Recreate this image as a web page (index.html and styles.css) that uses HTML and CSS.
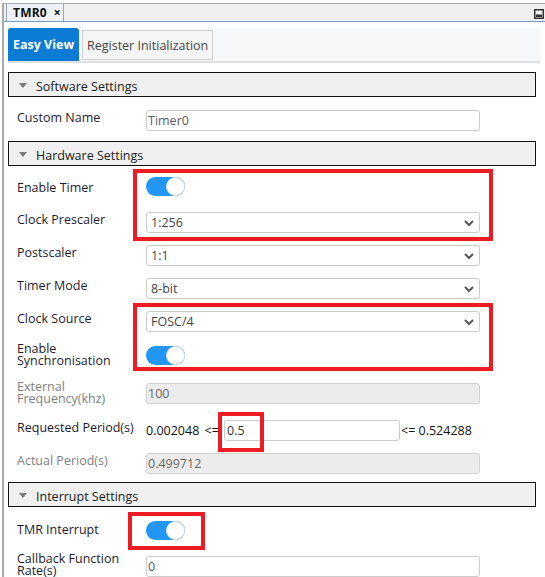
FILE: index.html
```html
<!DOCTYPE html>
<html lang="en">
<head>
<meta charset="utf-8">
<title>TMR0</title>
<link rel="stylesheet" href="styles.css">
</head>
<body>
<div class="frame">
  <div class="topbar">
    <div class="doc-tab"><span class="doc-title">TMR0</span><span class="doc-close">×</span></div>
    <svg class="minimize" width="10" height="10" viewBox="0 0 10 10">
      <rect x="0.75" y="0.75" width="8.5" height="8.5" fill="#f4f4f4" stroke="#333" stroke-width="1.5"/>
      <rect x="2" y="5.5" width="6" height="2.5" fill="#333"/>
    </svg>
  </div>
  <div class="content">
    <div class="view-tabs">
      <div class="view-tab active">Easy View</div>
      <div class="view-tab">Register Initialization</div>
    </div>

    <section class="section">
      <div class="section-header"><span class="caret"></span>Software Settings</div>
      <div class="section-body body-sw">
        <div class="row"><div class="lbl">Custom Name</div><div class="field input">Timer0</div></div>
      </div>
    </section>

    <section class="section">
      <div class="section-header"><span class="caret"></span>Hardware Settings</div>
      <div class="section-body body-hw">
        <div class="row row-toggle"><div class="lbl">Enable Timer</div><div class="toggle"><span class="knob"></span></div></div>
        <div class="row"><div class="lbl">Clock Prescaler</div><div class="field select"><span>1:256</span><svg class="chev" width="10" height="6" viewBox="0 0 10 6"><path d="M1 1 L5 5 L9 1" fill="none" stroke="#555" stroke-width="2"/></svg></div></div>
        <div class="row"><div class="lbl">Postscaler</div><div class="field select"><span>1:1</span><svg class="chev" width="10" height="6" viewBox="0 0 10 6"><path d="M1 1 L5 5 L9 1" fill="none" stroke="#555" stroke-width="2"/></svg></div></div>
        <div class="row"><div class="lbl">Timer Mode</div><div class="field select"><span>8-bit</span><svg class="chev" width="10" height="6" viewBox="0 0 10 6"><path d="M1 1 L5 5 L9 1" fill="none" stroke="#555" stroke-width="2"/></svg></div></div>
        <div class="row"><div class="lbl">Clock Source</div><div class="field select"><span>FOSC/4</span><svg class="chev" width="10" height="6" viewBox="0 0 10 6"><path d="M1 1 L5 5 L9 1" fill="none" stroke="#555" stroke-width="2"/></svg></div></div>
        <div class="row row-sync"><div class="lbl lbl-two">Enable<br>Synchronisation</div><div class="toggle"><span class="knob"></span></div></div>
        <div class="row row-ext"><div class="lbl lbl-two disabled">External<br>Frequency(khz)</div><div class="field input readonly">100</div></div>
        <div class="row"><div class="lbl">Requested Period(s)</div>
          <div class="period">
            <span class="bound bound-low">0.002048 &lt;=</span>
            <div class="input period-input">0.5</div>
            <span class="bound">&lt;= 0.524288</span>
          </div>
        </div>
        <div class="row"><div class="lbl disabled">Actual Period(s)</div><div class="field input readonly">0.499712</div></div>
      </div>
    </section>

    <section class="section">
      <div class="section-header"><span class="caret"></span>Interrupt Settings</div>
      <div class="section-body body-int">
        <div class="row row-toggle"><div class="lbl">TMR Interrupt</div><div class="toggle"><span class="knob"></span></div></div>
        <div class="row"><div class="lbl lbl-two lbl-cb">Callback Function<br>Rate(s)</div><div class="field input">0</div></div>
      </div>
    </section>
  </div>
</div>

<div class="mark mark-1"></div>
<div class="mark mark-2"></div>
<div class="mark mark-3"></div>
<div class="mark mark-4"></div>
</body>
</html>
```

FILE: styles.css
```css
html, body {
  margin: 0;
  padding: 0;
  background: #ffffff;
}
body {
  width: 545px;
  height: 577px;
  overflow: hidden;
  position: relative;
  font-family: "Open Sans", "Noto Sans", sans-serif;
  font-size: 12.5px;
  color: #222;
}
.frame {
  margin: 3px 0 0 2px;
  border-left: 2px solid #a9a9a9;
  height: 574px;
}
.topbar {
  height: 17px;
  border-top: 1px solid #a7adb3;
  border-bottom: 1px solid #7d9ec0;
  background: #f0f0f0;
  display: flex;
  justify-content: space-between;
  align-items: flex-start;
  padding-left: 2px;
}
.doc-tab {
  height: 17px;
  box-sizing: border-box;
  width: 58px;
  border-left: 1px solid #9aa5b1;
  border-right: 1px solid #9aa5b1;
  background: #eef1f6;
  display: flex;
  align-items: center;
  padding-left: 6px;
  font-size: 12px;
  font-weight: 700;
  color: #111;
}
.doc-title { letter-spacing: 0.2px; }
.doc-close {
  margin-left: 7px;
  font-size: 12px;
  font-weight: 700;
}
.minimize {
  margin-top: 5px;
  margin-right: 1px;
}
.content {
  padding: 6px 5px 0 4px;
}
.view-tabs {
  height: 33px;
  background: #f6f7f9;
  border-bottom: 2px solid #dedfe1;
  display: flex;
  align-items: flex-start;
}
.view-tab {
  box-sizing: border-box;
  height: 30px;
  margin-top: 2px;
  margin-left: 3px;
  padding: 0 4px;
  border: 1px solid #d0d0d0;
  background: #f5f5f5;
  color: #444;
  font-size: 12.5px;
  display: flex;
  align-items: center;
}
.view-tab.active {
  height: 33px;
  margin: 0;
  width: 71px;
  border: none;
  border-radius: 3px 3px 0 0;
  background: #0b7bd3;
  color: #fff;
  font-weight: 700;
  font-size: 12.5px;
  padding: 0 0 0 5px;
}
.section {
  margin-right: 4px;
}
.section:first-of-type { margin-top: 9px; }
.section-header {
  box-sizing: border-box;
  height: 25px;
  padding-top: 3px;
  border: 1px solid #111;
  background: #f0f0f0;
  display: flex;
  align-items: center;
  color: #222;
  font-size: 12.5px;
}
.caret {
  width: 0;
  height: 0;
  margin: 0 9px 2px 10px;
  border-left: 4.5px solid transparent;
  border-right: 4.5px solid transparent;
  border-top: 5px solid #7a7a7a;
}
.section-body {
  padding-left: 9px;
}
.body-sw { padding-top: 7px; padding-bottom: 4px; }
.body-hw { padding-bottom: 2px; }
.body-int { padding-top: 3px; }
.row {
  height: 33px;
  display: flex;
  align-items: center;
}
.row-toggle { height: 40px; }
.row-sync { height: 34px; }
.row-ext { height: 42px; }
.lbl {
  width: 129px;
  flex: none;
  line-height: 13px;
  margin-bottom: 6px;
  color: #1e1b2e;
}
.row-toggle .lbl { margin-bottom: 0; margin-top: 2px; }
.body-int .row-toggle .lbl { margin-top: 0; margin-bottom: 1px; }
.lbl-two {
  line-height: 12px;
  margin-bottom: 0;
}
.lbl-cb { margin-bottom: 3px; }
.lbl.disabled { color: #808080; }
.field {
  box-sizing: border-box;
  width: 334px;
  height: 21px;
  border: 1px solid #cccccc;
  border-radius: 3px;
  display: flex;
  align-items: center;
}
.input {
  padding-left: 1px;
  color: #555a66;
}
.readonly {
  background: #ececec;
  border-color: #d2d2d2;
  color: #666;
}
.select {
  padding: 0 5px 0 4px;
  justify-content: space-between;
  color: #444;
}
.chev { flex: none; }
.toggle {
  box-sizing: border-box;
  width: 39px;
  height: 19px;
  border-radius: 10px;
  background: #2196f3;
  display: flex;
  justify-content: flex-end;
  align-items: center;
}
.knob {
  box-sizing: border-box;
  width: 19px;
  height: 19px;
  border-radius: 50%;
  background: #fff;
  border: 1px solid #e2e2e2;
}
.period {
  display: flex;
  align-items: center;
  color: #111;
}
.bound-low {
  width: 78px;
  flex: none;
  word-spacing: 2px;
}
.period-input {
  box-sizing: border-box;
  width: 176px;
  height: 21px;
  margin-right: 1px;
  border: 1px solid #cccccc;
  border-radius: 3px;
  display: flex;
  align-items: center;
  padding-left: 2px;
  color: #333;
}
.mark {
  position: absolute;
  box-sizing: border-box;
  border: 4px solid #ed1c24;
}
.mark-1 { left: 133px; top: 169px; width: 360px; height: 72px; }
.mark-2 { left: 133px; top: 303px; width: 360px; height: 68px; }
.mark-3 { left: 218px; top: 412px; width: 46px; height: 40px; }
.mark-4 { left: 128px; top: 512px; width: 77px; height: 38px; }
```
